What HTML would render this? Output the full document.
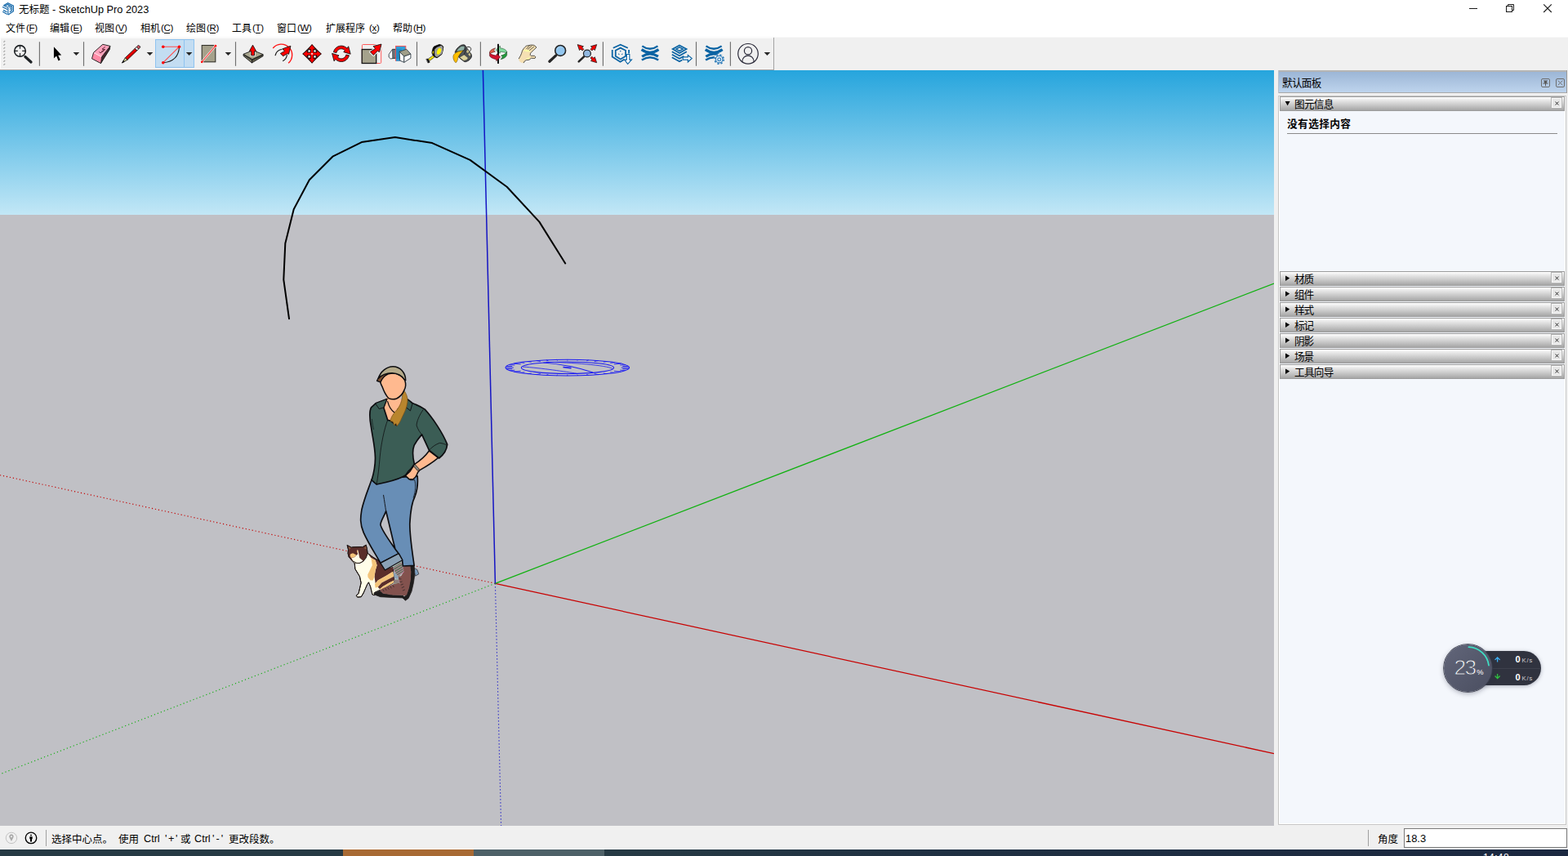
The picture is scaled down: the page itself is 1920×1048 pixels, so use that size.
<!DOCTYPE html>
<html lang="zh">
<head>
<meta charset="utf-8">
<title>SketchUp Pro 2023</title>
<style>
*{box-sizing:border-box;margin:0;padding:0}
html,body{width:1920px;height:1048px;overflow:hidden;background:#fff;font-family:"Liberation Sans",sans-serif;color:#000}
#app{position:relative;width:1920px;height:1048px;overflow:hidden;background:#fff}
.abs{position:absolute}
svg.cj{position:absolute;overflow:visible;pointer-events:none}
svg text{font-family:"Liberation Sans","Noto Sans CJK SC",sans-serif}
.t{position:absolute;white-space:nowrap;line-height:1}
/* ---------- title + menu ---------- */
#titlebar{left:0;top:0;width:1920px;height:23px;background:#fff}
#menubar{left:0;top:23px;width:1920px;height:22px;background:#fff}
.mlat{font-size:11.5px;top:29px;letter-spacing:-0.3px}
/* ---------- toolbar ---------- */
#toolbar{left:0;top:45px;width:1920px;height:41px;background:#f0f0f0;border-top:1px solid #fafafa}
.sep{position:absolute;top:51px;width:1px;height:30px;background:#8c8c8c}
/* ---------- viewport ---------- */
#view{left:0;top:86px;width:1560px;height:925px;background:#c0c0c5;overflow:hidden}
#sky{left:0;top:0;width:1560px;height:177.4px;background:linear-gradient(#26a5dd 0%,#c2e7f6 100%)}
/* ---------- right tray ---------- */
#tray{left:1560px;top:86px;width:360px;height:925px;background:#f0f0f0}
#trayTitle{left:1565px;top:86px;width:354px;height:28px;background:linear-gradient(#b4b4b4 0,#b4b4b4 2px,#9cb6d6 2px,#bed4ed 27px,#a9a9a9 27px);border-right:1px solid #9a9a9a;border-left:1px solid #b9c3cf}
#trayBody{left:1565px;top:117px;width:353px;height:893px;background:#f4f7fc;border:1px solid #c6c6c6;box-shadow:inset 0 0 0 1px #fff}
.sec{position:absolute;left:1567px;width:349px;height:18px;border:1px solid #9c9c9c;background:linear-gradient(#ffffff 0%,#e9e9e9 22%,#c9c9c9 60%,#a6a6a6 100%)}
.sec .x{position:absolute;right:3px;top:1px;width:12px;height:12px;background:#e6e6e6;border:1px solid #fafafa;box-shadow:0 0 0 1px #b4b4b4}
/* ---------- status bar ---------- */
#status{left:0;top:1011px;width:1920px;height:29px;background:#f0f0f0;border-bottom:1px solid #fff}
#vcb{left:1719px;top:1014px;width:200px;height:24px;background:#fff;border:1px solid #7a7a7a}
#strip{left:0;top:1040px;width:1920px;height:8px;background:linear-gradient(90deg,#263a44 0,#263a44 40%,#1f3042 60%,#1b2840 100%)}
</style>
</head>
<body>
<div id="app">

<!-- ================= TITLE BAR ================= -->
<div id="titlebar" class="abs"></div>
<svg class="abs" style="left:0;top:0" width="1920" height="23" viewBox="0 0 1920 23">
<!-- SketchUp logo : zoomed coords [0,0,40,24] x43.67 -->
<g transform="scale(0.0229)" fill="none" stroke="#0f65a8" stroke-width="50" stroke-linejoin="miter" stroke-linecap="butt">
<path d="M190 290L420 160L718 305V600L445 785"/>
<path d="M275 305L420 235L638 345V560L520 645"/>
<path d="M425 318L560 385V540"/>
<path d="M130 372L400 505"/>
<path d="M195 292L432 408V795"/>
<path d="M175 540L372 640"/>
<path d="M140 625L385 765"/>
</g>
<!-- window controls -->
<g fill="none" stroke="#1a1a1a" stroke-width="1">
<path d="M1799 10.5H1809"/>
<rect x="1844.5" y="7.5" width="7" height="7"/>
<path d="M1846.5 7.5V5.5H1853.5V12.5H1851.5"/>
<path d="M1890.2 5.4L1899.8 15M1899.8 5.4L1890.2 15" stroke-width="1.1"/>
</g>
</svg>

<svg class="cj" style="left:22.6px;top:3.27px" width="38.5" height="17.5" viewBox="0 -13.12 38.5 17.5"><text x="0" y="0" font-size="12.5" fill="#000">无标题</text></svg>
<svg class="cj" style="left:64px;top:2.28px" width="120.3" height="19.12" viewBox="0 -14.03 120.3 19.12"><text x="0" y="0" font-size="12.75" textLength="118.3" lengthAdjust="spacing" fill="#000">- SketchUp Pro 2023</text></svg>

<!-- ================= MENU BAR ================= -->
<div id="menubar" class="abs"></div>
<svg class="cj" style="left:7.4px;top:26.2px" width="25" height="16.8" viewBox="0 -12.6 25 16.8"><text x="0" y="0" font-size="12" fill="#000">文件</text></svg>
<svg class="cj" style="left:61.4px;top:26.2px" width="25" height="16.8" viewBox="0 -12.6 25 16.8"><text x="0" y="0" font-size="12" fill="#000">编辑</text></svg>
<svg class="cj" style="left:116.4px;top:26.2px" width="25" height="16.8" viewBox="0 -12.6 25 16.8"><text x="0" y="0" font-size="12" fill="#000">视图</text></svg>
<svg class="cj" style="left:172.4px;top:26.2px" width="25" height="16.8" viewBox="0 -12.6 25 16.8"><text x="0" y="0" font-size="12" fill="#000">相机</text></svg>
<svg class="cj" style="left:228.4px;top:26.2px" width="25" height="16.8" viewBox="0 -12.6 25 16.8"><text x="0" y="0" font-size="12" fill="#000">绘图</text></svg>
<svg class="cj" style="left:284.4px;top:26.2px" width="25" height="16.8" viewBox="0 -12.6 25 16.8"><text x="0" y="0" font-size="12" fill="#000">工具</text></svg>
<svg class="cj" style="left:339.4px;top:26.2px" width="25" height="16.8" viewBox="0 -12.6 25 16.8"><text x="0" y="0" font-size="12" fill="#000">窗口</text></svg>
<svg class="cj" style="left:399.4px;top:26.2px" width="49" height="16.8" viewBox="0 -12.6 49 16.8"><text x="0" y="0" font-size="12" fill="#000">扩展程序</text></svg>
<svg class="cj" style="left:481.4px;top:26.2px" width="25" height="16.8" viewBox="0 -12.6 25 16.8"><text x="0" y="0" font-size="12" fill="#000">帮助</text></svg>
<svg class="cj" style="left:32px;top:25.35px" width="16.1" height="17.25" viewBox="0 -12.65 16.1 17.25"><text x="0" y="0" font-size="11.5" textLength="14.1" lengthAdjust="spacing" fill="#000">(F)</text></svg><div class="abs" style="left:35.53px;top:40.1px;width:6.43px;height:1px;background:#000"></div>
<svg class="cj" style="left:86px;top:25.35px" width="16.74" height="17.25" viewBox="0 -12.65 16.74 17.25"><text x="0" y="0" font-size="11.5" textLength="14.74" lengthAdjust="spacing" fill="#000">(E)</text></svg><div class="abs" style="left:89.53px;top:40.1px;width:7.08px;height:1px;background:#000"></div>
<svg class="cj" style="left:141px;top:25.35px" width="16.74" height="17.25" viewBox="0 -12.65 16.74 17.25"><text x="0" y="0" font-size="11.5" textLength="14.74" lengthAdjust="spacing" fill="#000">(V)</text></svg><div class="abs" style="left:144.53px;top:40.1px;width:7.08px;height:1px;background:#000"></div>
<svg class="cj" style="left:197px;top:25.35px" width="17.38" height="17.25" viewBox="0 -12.65 17.38 17.25"><text x="0" y="0" font-size="11.5" textLength="15.38" lengthAdjust="spacing" fill="#000">(C)</text></svg><div class="abs" style="left:200.53px;top:40.1px;width:7.72px;height:1px;background:#000"></div>
<svg class="cj" style="left:253px;top:25.35px" width="17.38" height="17.25" viewBox="0 -12.65 17.38 17.25"><text x="0" y="0" font-size="11.5" textLength="15.38" lengthAdjust="spacing" fill="#000">(R)</text></svg><div class="abs" style="left:256.53px;top:40.1px;width:7.72px;height:1px;background:#000"></div>
<svg class="cj" style="left:309px;top:25.35px" width="16.1" height="17.25" viewBox="0 -12.65 16.1 17.25"><text x="0" y="0" font-size="11.5" textLength="14.1" lengthAdjust="spacing" fill="#000">(T)</text></svg><div class="abs" style="left:312.53px;top:40.1px;width:6.43px;height:1px;background:#000"></div>
<svg class="cj" style="left:364px;top:25.35px" width="19.93" height="17.25" viewBox="0 -12.65 19.93 17.25"><text x="0" y="0" font-size="11.5" textLength="17.93" lengthAdjust="spacing" fill="#000">(W)</text></svg><div class="abs" style="left:367.53px;top:40.1px;width:10.26px;height:1px;background:#000"></div>
<svg class="cj" style="left:452px;top:25.35px" width="14.82" height="17.25" viewBox="0 -12.65 14.82 17.25"><text x="0" y="0" font-size="11.5" textLength="12.82" lengthAdjust="spacing" fill="#000">(x)</text></svg><div class="abs" style="left:455.53px;top:40.1px;width:5.15px;height:1px;background:#000"></div>
<svg class="cj" style="left:506px;top:25.35px" width="17.38" height="17.25" viewBox="0 -12.65 17.38 17.25"><text x="0" y="0" font-size="11.5" textLength="15.38" lengthAdjust="spacing" fill="#000">(H)</text></svg><div class="abs" style="left:509.53px;top:40.1px;width:7.72px;height:1px;background:#000"></div>

<!-- ================= TOOLBAR ================= -->
<div id="toolbar" class="abs"></div>
<svg class="abs" style="left:0;top:45px" width="960" height="42" viewBox="0 45 960 42">
<rect x="0" y="45" width="1" height="41" fill="#fff"/>
<rect x="0" y="46" width="948" height="1" fill="#fbfbfb"/>
<rect x="0" y="84" width="947" height="1" fill="#f8f8f8"/>
<rect x="0" y="85" width="948" height="1" fill="#a3a3a3"/>
<rect x="947" y="46" width="1" height="40" fill="#a3a3a3"/>
<path d="M4.1 52.6 L5.9 50.8" stroke="#fff" stroke-width="1.3"/><path d="M4.4 51.8 L6.2 50" stroke="#a2a2a2" stroke-width="1.1"/>
<path d="M4.1 56.6 L5.9 54.8" stroke="#fff" stroke-width="1.3"/><path d="M4.4 55.8 L6.2 54" stroke="#a2a2a2" stroke-width="1.1"/>
<path d="M4.1 60.6 L5.9 58.8" stroke="#fff" stroke-width="1.3"/><path d="M4.4 59.8 L6.2 58" stroke="#a2a2a2" stroke-width="1.1"/>
<path d="M4.1 64.6 L5.9 62.8" stroke="#fff" stroke-width="1.3"/><path d="M4.4 63.8 L6.2 62" stroke="#a2a2a2" stroke-width="1.1"/>
<path d="M4.1 68.6 L5.9 66.8" stroke="#fff" stroke-width="1.3"/><path d="M4.4 67.8 L6.2 66" stroke="#a2a2a2" stroke-width="1.1"/>
<path d="M4.1 72.6 L5.9 70.8" stroke="#fff" stroke-width="1.3"/><path d="M4.4 71.8 L6.2 70" stroke="#a2a2a2" stroke-width="1.1"/>
<path d="M4.1 76.6 L5.9 74.8" stroke="#fff" stroke-width="1.3"/><path d="M4.4 75.8 L6.2 74" stroke="#a2a2a2" stroke-width="1.1"/>
<path d="M4.1 80.6 L5.9 78.8" stroke="#fff" stroke-width="1.3"/><path d="M4.4 79.8 L6.2 78" stroke="#a2a2a2" stroke-width="1.1"/>
<line x1="48.4" y1="51.2" x2="48.4" y2="80.8" stroke="#707070" stroke-width="1.15"/>
<line x1="102.5" y1="51.2" x2="102.5" y2="80.8" stroke="#707070" stroke-width="1.15"/>
<line x1="288.5" y1="51.2" x2="288.5" y2="80.8" stroke="#707070" stroke-width="1.15"/>
<line x1="510.5" y1="51.2" x2="510.5" y2="80.8" stroke="#707070" stroke-width="1.15"/>
<line x1="588.4" y1="51.2" x2="588.4" y2="80.8" stroke="#707070" stroke-width="1.15"/>
<line x1="738.4" y1="51.2" x2="738.4" y2="80.8" stroke="#707070" stroke-width="1.15"/>
<line x1="852.5" y1="51.2" x2="852.5" y2="80.8" stroke="#707070" stroke-width="1.15"/>
<line x1="894.4" y1="51.2" x2="894.4" y2="80.8" stroke="#707070" stroke-width="1.15"/>
<polygon points="89.6,63.9 97.2,63.9 93.4,68.1" fill="#262626"/>
<polygon points="179.7,63.9 187.3,63.9 183.5,68.1" fill="#262626"/>
<polygon points="227.8,63.9 235.4,63.9 231.6,68.1" fill="#262626"/>
<polygon points="275.6,63.9 283.2,63.9 279.4,68.1" fill="#262626"/>
<polygon points="935.6,63.9 943.2,63.9 939.4,68.1" fill="#262626"/>
<g fill="none" stroke="#1e2225" stroke-linecap="round">
<circle cx="24.5" cy="62.4" r="6.8" stroke-width="1.6"/>
<path d="M24.5 55.8V59.7M24.5 65.1V69M17.9 62.4H21.8M27.2 62.4H31.1" stroke-width="1.1" stroke-linecap="butt"/>
<line x1="30.9" y1="69.6" x2="38" y2="75.9" stroke-width="3.3"/>
</g>
<polygon points="65.9,57.3 65.9,71.5 69.1,68.6 71.5,74.4 73.8,73.3 71.2,67.8 75.3,67.6" fill="#000" stroke="#fff" stroke-width="1" stroke-linejoin="round" paint-order="stroke"/>
<polygon points="124.6,69.6 134.9,56.4 134.3,60.4 123.5,77.6" fill="#47262d"/>
<polygon points="114.6,64.3 125.8,54.3 134.9,56.4 124.6,69.6" fill="#ffa3bc"/>
<polygon points="114.6,64.3 124.6,69.6 123.5,77.6 112.5,71.8" fill="#ff8ba6"/>
<path d="M115 64.7L124.5 69.7" stroke="#ffe9ee" stroke-width="0.9" fill="none"/>
<path d="M114.6 64.3L125.8 54.3L134.9 56.4L134.3 60.4L123.5 77.6L112.5 71.8ZM124.6 69.6L123.5 77.6M124.6 69.6L134.9 56.4" fill="none" stroke="#141414" stroke-width="0.9" stroke-linejoin="round"/>
<path d="M128.8 57.4L125 60.2L128.6 60.6L123.8 63.4M127.4 61.8L123 65L121.4 63.4" stroke="#5a2032" stroke-width="0.95" fill="none"/>
<g transform="translate(149.6,76.9) rotate(-43.9)" stroke="#141414" stroke-width="0.85" stroke-linejoin="round">
<rect x="26" y="-1.8" width="3.6" height="3.6" rx="1.3" fill="#d8505e"/>
<rect x="23.3" y="-1.8" width="2.9" height="3.6" fill="#f6f6f6"/>
<rect x="7" y="-1.8" width="16.4" height="3.6" fill="#f40000"/>
<rect x="7.3" y="0.5" width="15.8" height="1" fill="#b00000" stroke="none"/>
<polygon points="0,0 7,-1.8 7,1.8" fill="#dedc9c"/>
<polygon points="0,0 2.9,-0.75 2.9,0.75" fill="#141414"/>
</g>
<rect x="190.5" y="48.5" width="47" height="34" fill="#c3ddf2" stroke="#8fc3f0" stroke-width="1"/>
<line x1="225.5" y1="48.5" x2="225.5" y2="82.5" stroke="#8fc3f0" stroke-width="1"/>
<polygon points="227.8,63.9 235.4,63.9 231.6,68.1" fill="#262626"/>
<path d="M199.75 76.7Q218.6 75.2 219.5 57.2" fill="none" stroke="#141414" stroke-width="1.05"/>
<path d="M199.75 57.2H219.5L199.75 76.7" fill="none" stroke="#ff4d4d" stroke-width="1.05"/>
<circle cx="199.75" cy="57.2" r="1.8" fill="#ff0000"/>
<circle cx="219.5" cy="57.2" r="1.8" fill="#ff0000"/>
<circle cx="199.75" cy="76.7" r="1.8" fill="#ff0000"/>
<rect x="247.2" y="55.5" width="16.6" height="20.3" fill="#a5a18b" stroke="#33322a" stroke-width="1.1"/>
<line x1="247.2" y1="75.8" x2="263.9" y2="56.2" stroke="#f4f4f4" stroke-width="2.4"/>
<circle cx="247.2" cy="75.8" r="2.1" fill="#f4f4f4"/><circle cx="263.9" cy="56.2" r="2.1" fill="#f4f4f4"/>
<line x1="247.2" y1="75.8" x2="263.9" y2="56.2" stroke="#ff3535" stroke-width="1.05"/>
<circle cx="247.2" cy="75.8" r="1.35" fill="#ff0000"/><circle cx="263.9" cy="56.2" r="1.35" fill="#ff0000"/>
<g stroke="#1c1c1c" stroke-width="0.9" stroke-linejoin="round">
<polygon points="298,66.3 308.9,72.6 308.4,77 298,68.4" fill="#7d7b66"/>
<polygon points="308.9,72.6 322.1,66.6 322.1,68.7 308.4,77" fill="#66644f"/>
<polygon points="298,66.3 309.8,61.6 322.1,66.6 308.9,72.6" fill="#a9a68e"/>
<path d="M298.6 67.4L308.7 73.9L321.6 67.7" fill="none" stroke-width="0.7"/>
</g>
<rect x="306.6" y="62.6" width="6" height="6.4" fill="#fbfbfb"/>
<polygon points="309.5,55.2 313.7,62.7 311.5,62.7 311.5,67.9 307.7,67.9 307.7,62.7 305.3,62.7" fill="#ff0000" stroke="#141414" stroke-width="0.9" stroke-linejoin="round"/>
<path d="M334.24 58.99A13.2 13.2 0 1 1 353.09 77.32" fill="none" stroke="#ff1414" stroke-width="1.35"/>
<path d="M337 68.2Q338.2 61.4 345.4 60.2M346.2 74.7Q351 72.2 351.4 67" fill="none" stroke="#1c1c1c" stroke-width="1.15"/>
<polygon points="355.9,56.3 345.9,59.8 348.5,62.6 343.3,65.5 346.7,68.7 351.6,65.8 353.6,66.2" fill="#ff0000" stroke="#141414" stroke-width="0.9" stroke-linejoin="round"/>
<polygon points="382.05,54.3 393.65,65.9 382.05,77.5 370.45,65.9" fill="#2a2a2a"/>
<polygon points="382.05,54.6 386.55,60.2 383.8,60.2 383.8,64.15 387.75,64.15 387.75,61.4 393.35,65.9 387.75,70.4 387.75,67.65 383.8,67.65 383.8,71.6 386.55,71.6 382.05,77.2 377.55,71.6 380.3,71.6 380.3,67.65 376.35,67.65 376.35,70.4 370.75,65.9 376.35,61.4 376.35,64.15 380.3,64.15 380.3,60.2 377.55,60.2" fill="#ff0000" stroke="#1a0000" stroke-width="0.8"/>
<rect x="377.25" y="61.1" width="2.7" height="2.7" fill="#fff" stroke="#2a2a2a" stroke-width="0.35"/>
<rect x="377.25" y="68" width="2.7" height="2.7" fill="#fff" stroke="#2a2a2a" stroke-width="0.35"/>
<rect x="384.15" y="61.1" width="2.7" height="2.7" fill="#fff" stroke="#2a2a2a" stroke-width="0.35"/>
<rect x="384.15" y="68" width="2.7" height="2.7" fill="#fff" stroke="#2a2a2a" stroke-width="0.35"/>
<rect x="381.2" y="65.05" width="1.7" height="1.7" fill="#fff"/>
<polygon points="408.41,63.78 408.84,62.32 409.5,60.95 410.36,59.7 411.41,58.59 412.62,57.66 413.95,56.94 415.39,56.43 416.89,56.15 418.41,56.11 419.92,56.31 421.38,56.74 422.75,57.4 424,58.26 425.11,59.31 426.65,56.74 429.19,66.19 420.81,63.68 422.36,61.79 421.68,61.14 420.9,60.6 420.05,60.2 419.15,59.93 418.21,59.81 417.27,59.83 416.35,60 415.46,60.32 414.63,60.77 413.89,61.34 413.24,62.02 412.7,62.8 412.3,63.65 412.03,64.55" fill="#ff0000" stroke="#141414" stroke-width="0.9" stroke-linejoin="round"/>
<polygon points="427.39,67.82 426.96,69.28 426.3,70.65 425.44,71.9 424.39,73.01 423.18,73.94 421.85,74.66 420.41,75.17 418.91,75.45 417.39,75.49 415.88,75.29 414.42,74.86 413.05,74.2 411.8,73.34 410.69,72.29 409.15,74.86 406.61,65.41 414.99,67.92 413.44,69.81 414.12,70.46 414.9,71 415.75,71.4 416.65,71.67 417.59,71.79 418.53,71.77 419.45,71.6 420.34,71.28 421.17,70.83 421.91,70.26 422.56,69.58 423.1,68.8 423.5,67.95 423.77,67.05" fill="#ff0000" stroke="#141414" stroke-width="0.9" stroke-linejoin="round"/>
<rect x="443.4" y="54.5" width="23.3" height="23" rx="1.2" fill="none" stroke="#ff5a5a" stroke-width="1"/>
<rect x="443.2" y="60.5" width="17.5" height="17" fill="#a5a28c" stroke="#141414" stroke-width="1.3"/>
<polygon points="467.05,54 457,56.6 459.6,59.5 453.3,63.5 457.3,67.6 462.4,62.3 464.5,63.8" fill="#fbfbfb" stroke="#fbfbfb" stroke-width="2.6" stroke-linejoin="round"/>
<polygon points="467.05,54 457,56.6 459.6,59.5 453.3,63.5 457.3,67.6 462.4,62.3 464.5,63.8" fill="#ff0000" stroke="#141414" stroke-width="0.9" stroke-linejoin="round"/>
<g stroke="#38434c" stroke-width="0.95" stroke-linejoin="round">
<polygon points="476.2,66.6 480.5,60.3 484.2,60.3 484.2,71.2 478.3,71.9 476.2,70" fill="#fff"/>
<polygon points="480.7,60.5 485.2,60.5 485.2,71.1 480.9,71.6" fill="#6f747a"/>
</g>
<rect x="484.6" y="56.4" width="12.2" height="18" fill="#2f9fd9" stroke="#ff4a4a" stroke-width="0.9"/>
<rect x="485.2" y="59.6" width="6.6" height="14" fill="#1f8cc6"/>
<rect x="485" y="72.6" width="12" height="2.2" fill="#2f9fd9"/>
<g stroke="#38434c" stroke-width="0.95" stroke-linejoin="round">
<polygon points="489.1,63.2 494.8,68.9 494.8,76.4 489.7,74.1" fill="#fff"/>
<polygon points="494.8,68.9 502.9,66 502.9,71.2 494.8,76.4" fill="#fff"/>
<polygon points="489.1,63.2 497.7,60.3 502.9,66 494.8,68.9" fill="#a09e88"/>
</g>
<!-- ===== tape measure / paint bucket : zoomed coords of [506,46] x17.45 ===== -->
<g transform="translate(506,46) scale(0.057307)" stroke-linejoin="round" stroke-linecap="round">
<!-- bucket moved -->
</g>
<!-- ===== tape measure : zoomed coords of [518,50] x32.76 ===== -->
<g transform="translate(518,50) scale(0.030525)" stroke-linejoin="round" stroke-linecap="round">
<polygon points="136,732 200,722 270,858 204,882" fill="#0c0c0c" stroke="#0c0c0c" stroke-width="18"/>
<polygon points="402,596 470,640 282,790 204,742" fill="#ffef00" stroke="#141414" stroke-width="20"/>
<path d="M262 716L300 768M330 672L366 722" stroke="#8a7f00" stroke-width="14" fill="none"/>
<path d="M370 420L400 300L440 232L560 182L660 146L760 180L810 240L790 400L750 540L560 680L480 650L400 580L366 500Z" fill="#0c0c0c" stroke="#0c0c0c" stroke-width="30"/>
<path d="M492 332L560 272L738 202L778 262L768 420L738 520L560 640L492 598L472 450Z" fill="#9a9a9a" stroke="#cfcfcf" stroke-width="20"/>
<ellipse cx="640" cy="420" rx="76" ry="136" transform="rotate(22 640 420)" fill="#fff400"/>
<ellipse cx="406" cy="460" rx="22" ry="60" transform="rotate(8 406 460)" fill="#e8d900"/>
</g>
<!-- ===== paint bucket : zoomed coords of [550,50] x32.76 ===== -->
<g transform="translate(550,50) scale(0.030525)" stroke-linejoin="round" stroke-linecap="round">
<path d="M722 246C760 232 820 236 858 276C890 320 876 372 842 404L800 440" fill="none" stroke="#1d1d1d" stroke-width="30"/>
<path d="M236 452C262 362 330 262 470 178C560 140 640 160 652 196L722 302L802 422L880 522C920 590 900 660 866 704C830 760 760 812 662 842C630 846 604 836 588 822L420 692L372 640Z" fill="#4c5054" stroke="#1d1d1d" stroke-width="26"/>
<path d="M420 666L600 556L762 690L692 770L590 792Z" fill="#ddd39c" stroke="#1d1d1d" stroke-width="10"/>
<path d="M690 440L742 340L802 440L742 492Z" fill="#cabe8a"/>
<path d="M760 530L830 482L862 560L822 622Z" fill="#cabe8a"/>
<path d="M640 300C660 380 640 470 600 540" fill="none" stroke="#2c2f33" stroke-width="34"/>
<path d="M470 500L500 470M520 540L550 510M565 470L592 442" stroke="#8a8f94" stroke-width="12" fill="none"/>
<path d="M290 430C300 380 350 300 470 222C540 190 600 196 620 230C634 270 620 330 598 366L560 390Z" fill="#8fb0a6" stroke="#1d1d1d" stroke-width="20"/>
<path d="M562 394C500 396 410 410 330 442C260 474 196 524 166 590C148 660 170 760 212 822C230 850 254 878 270 874C300 860 322 800 340 750C350 690 366 640 400 580C440 520 500 450 562 394Z" fill="#ffc000" stroke="#2a2000" stroke-width="14"/>
<path d="M200 600C190 680 214 770 258 840" fill="none" stroke="#e6a400" stroke-width="22"/>
</g>
<!-- ===== orbit / pan / zoom : zoomed coords of [590,46] ===== -->
<g transform="translate(590,46) scale(0.057307)" stroke-linejoin="round">
<!-- hand moved -->
<!-- zoom -->
<line x1="1584" y1="382" x2="1446" y2="510" stroke="#262626" stroke-width="58" stroke-linecap="round"/>
<circle cx="1678" cy="278" r="112" fill="#93c6ee" stroke="#262626" stroke-width="28"/>
<path d="M1610 250C1625 210 1670 190 1710 205" fill="none" stroke="#a9d4f4" stroke-width="18" stroke-linecap="round"/>
</g>
<!-- ===== orbit : zoomed coords of [594,50] x32.76 ===== -->
<g transform="translate(594,50) scale(0.030525)" stroke-linejoin="round">
<ellipse cx="520" cy="516" rx="300" ry="62" fill="#fff"/>
<path d="M180 470C180 400 280 320 415 290L352 370L402 440C320 455 250 480 212 506Z" fill="#e0604a" stroke="#2a0e0c" stroke-width="15"/>
<path d="M430 370L600 200L608 290C720 296 850 360 872 440L860 476C800 465 700 450 604 440L600 506Z" fill="#7fda9c" stroke="#0e3018" stroke-width="15"/>
<rect x="495" y="125" width="60" height="790" fill="#000"/>
<path d="M180 470C200 520 320 575 448 590L466 520L612 650L452 812L442 742C330 725 190 660 178 590Z" fill="#d0142e" stroke="#2a0006" stroke-width="15"/>
<path d="M640 590C740 560 830 520 872 440L876 566C850 650 760 716 630 742L700 642Z" fill="#239a3c" stroke="#08260f" stroke-width="15"/>
</g>
<!-- ===== pan hand : zoomed coords of [630,50] x32.76 ===== -->
<g transform="translate(630,50) scale(0.030525)" stroke-linejoin="round" stroke-linecap="round">
<path d="M175 712L240 600L282 500L312 400L360 320L420 250L470 206L590 180L680 165L780 176L850 226L880 266L780 360L690 440L640 500L630 570L660 600L800 600L850 650L820 702L670 696L590 760L470 772L400 822L370 876L300 882L220 842L170 762Z" fill="#f5e0b3"/>
<ellipse cx="490" cy="398" rx="135" ry="34" transform="rotate(8 490 398)" fill="#fbfba6"/>
<ellipse cx="550" cy="706" rx="78" ry="30" transform="rotate(-14 550 706)" fill="#fbfba6"/>
<path d="M175 712L240 600L282 500L312 400L360 320L420 250L470 206L590 180L680 165L780 176L850 226L880 266L780 360L690 440L640 500L630 570L660 600L800 600L850 650L820 702L670 696L590 760L470 772L400 822L370 876" fill="none" stroke="#2c2a24" stroke-width="26"/>
<path d="M480 322L600 196M540 334L690 204M604 378L772 242" fill="none" stroke="#2c2a24" stroke-width="24"/>
</g>
<!-- ===== zoom extents : zoomed coords of [696,46] ===== -->
<g transform="translate(696,46) scale(0.057307)" stroke-linejoin="round">
<line x1="336" y1="404" x2="222" y2="512" stroke="#262626" stroke-width="46" stroke-linecap="round"/>
<circle cx="400" cy="340" r="78" fill="#92b9e1" stroke="#262626" stroke-width="22"/>
<g fill="#ff0000" stroke="#1c1c1c" stroke-width="14">
<polygon points="195,150 322,188 292,212 328,250 298,280 262,244 236,272"/>
<polygon points="605,150 478,188 508,212 472,250 502,280 538,244 564,272"/>
<polygon points="605,536 478,498 508,474 472,436 502,406 538,442 564,414"/>
</g>
</g>
<!-- ===== 3D warehouse / extension warehouse / layout : zoomed coords of [740,46] ===== -->
<g transform="translate(740,46) scale(0.057307)" fill="none" stroke="#0a63a3" stroke-linejoin="miter">
<path d="M188 222L345 152L503 222" stroke-width="30"/>
<path d="M170 262V412L340 520L425 468M525 262V342" stroke-width="31"/>
<path d="M345 220L455 274V398L345 462L240 398V274Z" stroke-width="31"/>
<path d="M345 275L362 292L345 306L328 292ZM298 338L322 352V372L298 356ZM392 338L368 352V372L392 356Z" fill="#0a63a3" stroke="none"/>
<path d="M478 358H538V474H584L500 564L430 474H478Z" fill="#fff" stroke-width="20"/>
<!-- extension warehouse -->
<path d="M808 180Q975 300 1142 180" stroke-width="40"/>
<path d="M795 255Q975 385 1160 255" stroke-width="56"/>
<path d="M805 405Q975 290 1150 405" stroke-width="56"/>
<path d="M800 480Q975 365 1155 480" stroke-width="44"/>
<!-- layout -->
<path d="M1460 245L1605 165L1755 245L1605 330Z" stroke-width="30"/>
<path d="M1532 245L1605 206L1680 245L1605 288Z" stroke-width="26"/>
<path d="M1445 302L1605 390L1760 302M1445 362L1605 450L1700 398M1445 422L1605 510L1662 480" stroke-width="30"/>
<path d="M1678 418H1786V376L1870 446L1786 520V474H1678Z" fill="#fff" stroke-width="21"/>
</g>
<!-- ===== extension manager ===== -->
<g transform="translate(818.2,46) scale(0.057307)" fill="none" stroke="#0a63a3">
<path d="M808 180Q975 300 1142 180" stroke-width="40"/>
<path d="M795 255Q975 385 1160 255" stroke-width="56"/>
<path d="M805 405Q975 290 1150 405" stroke-width="56"/>
<path d="M800 480Q975 365 1155 480" stroke-width="44"/>
</g>
<circle cx="880.7" cy="72.7" r="6.7" fill="#f0f0f0"/>
<circle cx="880.7" cy="72.7" r="5.5" fill="none" stroke="#2a7ab8" stroke-width="1.7" stroke-dasharray="2.16 2.16"/>
<circle cx="880.7" cy="72.7" r="4.2" fill="#fff" stroke="#2a7ab8" stroke-width="1.2"/>
<circle cx="880.7" cy="72.7" r="1.9" fill="#fff" stroke="#2a7ab8" stroke-width="1.2"/>
<!-- ===== user ===== -->
<clipPath id="ucl"><circle cx="916" cy="65.8" r="12.3"/></clipPath>
<g fill="none" stroke="#2b2b3a" stroke-width="1.2">
<circle cx="916" cy="65.8" r="12.3"/>
<circle cx="916" cy="62.3" r="4.6"/>
<circle cx="916" cy="75.2" r="7.1" clip-path="url(#ucl)"/>
</g>

</svg>


<!-- ================= VIEWPORT ================= -->
<div id="view" class="abs">
<div id="sky" class="abs"></div>
<svg class="abs" style="left:0;top:0" width="1560" height="925" viewBox="0 86 1560 925">
<!-- axes: dotted negative halves -->
<g fill="none" stroke-width="1.15">
<line x1="606.4" y1="714.3" x2="509" y2="693" stroke="#c40000" stroke-dasharray="1.2 2.85"/><line x1="424.5" y1="674.5" x2="0" y2="581.7" stroke="#c40000" stroke-dasharray="1.2 2.85"/>
<line x1="606.4" y1="714.3" x2="0" y2="947.8" stroke="#12ae12" stroke-dasharray="1.2 3.05"/>
<line x1="606.4" y1="714.3" x2="613.6" y2="1011" stroke="#1a1ac8" stroke-dasharray="1.2 2.8"/>
</g>
<!-- axes: solid positive halves -->
<g fill="none" stroke-width="1.25">
<line x1="606.4" y1="714.3" x2="1560" y2="922.6" stroke="#c80000"/>
<line x1="606.4" y1="714.3" x2="1560" y2="347" stroke="#0fb10f"/>
<line x1="606.4" y1="714.3" x2="591.4" y2="86" stroke="#1414c4" stroke-width="1.5"/>
</g>
<!-- arc being drawn (polyline segments) -->
<polyline fill="none" stroke="#000" stroke-width="2" stroke-linejoin="round" stroke-linecap="round"
 points="354,390.2 347.3,342.3 349.3,298.1 359.7,256.2 378.8,220.2 407.3,191.7 442.8,174.1 483.8,168.1 529.2,175.1 575.6,195.9 620.7,228.7 660.4,271.6 692.2,322.5"/>
<!-- protractor -->
<g fill="none" stroke="#1a1af2" stroke-width="1.05">
<ellipse cx="694.8" cy="450.1" rx="75.8" ry="9.9"/>
<path d="M770.6 450.1L760.7 450.1M769.4 451.8L762.4 451.7M766.0 453.5L759.3 453.2M760.4 455.1L751.9 454.4M752.9 456.5L747.3 455.9M743.5 457.7L738.9 457.0M732.7 458.7L727.8 457.6M720.7 459.4L718.3 458.5M708.0 459.8L706.7 458.9M694.8 460.0L694.8 458.7M681.6 459.8L682.9 458.9M668.9 459.4L671.3 458.5M656.9 458.7L661.8 457.6M646.1 457.7L650.7 457.0M636.7 456.5L642.3 455.9M629.2 455.1L637.7 454.4M623.6 453.5L630.3 453.2M620.2 451.8L627.2 451.7M619.0 450.1L628.9 450.1M620.2 448.4L627.2 448.5M623.6 446.7L630.3 447.0M629.2 445.2L637.7 445.8M636.7 443.7L642.3 444.3M646.1 442.5L650.7 443.2M656.9 441.5L661.8 442.6M668.9 440.8L671.3 441.7M681.6 440.4L682.9 441.3M694.8 440.2L694.8 441.5M708.0 440.4L706.7 441.3M720.7 440.8L718.3 441.7M732.7 441.5L727.8 442.6M743.5 442.5L738.9 443.2M752.9 443.7L747.3 444.3M760.4 445.2L751.9 445.8M766.0 446.7L759.3 447.0M769.4 448.4L762.4 448.5" stroke-width="0.9"/>
<ellipse cx="695" cy="450.2" rx="56.6" ry="7.3"/>
<path d="M665.4 444.1C690 446 712 451.5 726 455.9"/>
<path d="M668.5 443.3C700 443.6 742 447.2 750.5 451.4" stroke-width="0.8"/>
<path d="M640 449C662 450.5 694 455.2 706 457.3" stroke-width="0.8"/>
<path d="M689.5 449.5L699.5 450.7" stroke-width="1.7"/>
</g>
<!-- ============ CAT + BOOTS ; coords = zoom of [420,660,520,740] (x13.1) ============ -->
<g transform="translate(420,660) scale(0.076336)" stroke-linejoin="round" stroke-linecap="round">
<!-- cat silhouette (white base) -->
<path d="M185 390L150 350L95 290L80 230L85 170L70 100L135 135L150 130L300 125L310 130L370 95L385 160L395 228L480 290L560 340L612 382L660 498L800 452L822 660L810 702L640 800L560 830L520 850L500 902L470 886L440 762L412 694L390 724L330 862L292 926L232 932L214 906L250 870L290 702L268 600L196 482Z" fill="#fffde8" stroke="#17100f" stroke-width="13"/>
<!-- brown back -->
<path d="M395 228L480 290L560 340L612 382L660 498L800 452L802 520L690 590L560 660L520 712L505 600L520 500L545 420L520 340L450 300L420 262Z" fill="#5a2e2a"/>
<!-- orange shoulder -->
<path d="M450 300L520 340L545 420L520 500L505 600L482 662L440 662L400 612L396 570L430 500L470 420L456 332Z" fill="#f3c47a"/>
<!-- haunch stripes -->
<path d="M802 520L816 600L720 650L620 700L560 770L520 782L510 722L560 660L690 590Z" fill="#f3c47a"/>
<path d="M816 600L821 660L740 700L640 760L590 802L560 770L620 700L720 650Z" fill="#5a2e2a"/>
<path d="M821 660L810 702L700 762L620 812L590 802L640 760L740 700Z" fill="#f3c47a"/>
<path d="M412 694L440 762L470 886" stroke="#17100f" stroke-width="9" fill="none"/>
<path d="M330 862L390 724L412 694" stroke="#17100f" stroke-width="9" fill="none"/>
<path d="M185 390L196 482L268 600L290 702L250 870L214 906L232 932L292 926L330 862M470 886L500 902L520 850M395 228L480 290L560 340L612 382" fill="none" stroke="#17100f" stroke-width="13"/>
<!-- head -->
<path d="M70 100L135 135L150 130L300 125L310 130L370 95L385 160L395 230L370 300L330 350L270 385L215 380L150 350L95 290L80 230L85 170Z" fill="#5a2e2a" stroke="#17100f" stroke-width="12"/>
<path d="M88 118L128 142L100 170Z" fill="#8b5a3c"/><path d="M362 112L340 150L378 160Z" fill="#8b5a3c"/>
<path d="M120 240L160 225L215 255L185 292L130 302L114 270Z" fill="#f3c47a"/>
<path d="M135 305L185 290L238 240L224 176L240 176L266 300L322 346L270 380L215 376L160 346Z" fill="#fffde8"/>
<path d="M222 182L234 182L238 215L228 215Z" fill="#f3b060"/>
<path d="M200 388C240 392 290 385 332 352" stroke="#17100f" stroke-width="9" fill="none"/>
<!-- boot 2 (upright) -->
<path d="M880 600L1000 590L1030 900L960 912L930 770Z" fill="#83524e"/>
<path d="M1075 415L1142 430L1152 560L1132 700L1100 840L1050 950L1000 986L958 940L1020 900L1060 780L1085 650L1090 520Z" fill="#1f1d1d" stroke="#1f1d1d" stroke-width="10"/>
<path d="M958 442L1075 415L1090 520L1085 650L1060 780L1020 900L985 870L940 760L900 650L975 520Z" fill="#83524e"/>
<path d="M1150 470L1190 490L1216 560L1160 592L1150 540Z" fill="#7d9dbd" stroke="#17100f" stroke-width="8"/>
<!-- sock + cuff back -->
<path d="M800 452L930 370L976 520L890 602L850 560Z" fill="#5f8a60"/>
<path d="M806 470L936 392M818 505L948 428M832 538L960 462M850 566L970 494M872 590L976 524" stroke="#d070a8" stroke-width="13" fill="none"/>
<path d="M812 487L942 410M825 521L954 445M840 552L965 478M860 578L974 508" stroke="#2b2b2b" stroke-width="3" fill="none"/>
<path d="M810 520L850 560L890 610L880 642L822 626Z" fill="#8ba2b6"/>
<path d="M820 652L900 650L905 700L815 716Z" fill="#5f8a60"/>
<path d="M822 668L902 664M820 696L904 688" stroke="#d070a8" stroke-width="11" fill="none"/>
<!-- boot 1 (flat) -->
<path d="M500 862L540 850L590 830L640 875L800 900L960 905L1000 962L950 942L800 936L600 926L510 892Z" fill="#1f1d1d" stroke="#1f1d1d" stroke-width="12"/>
<path d="M590 822L640 790L810 725L905 700L940 760L985 870L960 902L800 897L640 872Z" fill="#83524e"/>
<path d="M640 812L655 836M680 796L695 820M720 780L735 804M760 762L775 786M800 744L815 768M900 640L930 640M915 690L945 682M930 735L962 722M945 780L978 765M960 825L990 812" stroke="#1f1d1d" stroke-width="8" fill="none"/>
</g>
<g transform="translate(410,580) scale(0.15274)" stroke-linejoin="round" stroke-linecap="round">
<!-- jeans -->
<path d="M296 44L662 18C668 80 662 130 642 182C616 232 606 300 601 400C600 500 620 620 636 736L546 740L540 690L512 640L484 604C462 520 440 420 410 300C396 340 366 380 366 410C380 460 440 540 490 612L512 640L366 716C330 650 270 560 230 470C200 400 205 350 215 290C235 200 270 120 296 44Z" fill="#688eb6" stroke="#0d0d10" stroke-width="11"/>
<path d="M390 172C398 220 404 262 410 300" stroke="#0d0d10" stroke-width="6" fill="none"/>
<path d="M598 30L604 52L640 50C650 90 648 140 630 190" stroke="#0d0d10" stroke-width="5" fill="none"/>
<!-- cuff -->
<path d="M366 716L512 640L542 692L402 772Z" fill="#8ba2b6" stroke="#0d0d10" stroke-width="8"/>
</g>

<!-- ============ PERSON upper ; coords = zoom of [420,440,570,600] ============ -->
<g transform="translate(420,440) scale(0.15274)" stroke-linejoin="round" stroke-linecap="round">
<!-- forearm + hand -->
<path d="M690 733L764 788C720 825 665 860 618 886L600 905C592 930 580 950 560 962L530 960L500 932L535 900L574 840C620 810 660 775 690 733Z" fill="#ffb98f" stroke="#0d0d10" stroke-width="10"/>
<path d="M574 838L612 880L598 892L562 852Z" fill="#8d8a7e" stroke="#0d0d10" stroke-width="5"/>
<!-- neck / chest skin -->
<path d="M350 300L450 295L480 345L440 440L400 505L352 492L325 385Z" fill="#ffb98f"/>
<!-- shirt -->
<path d="M262 352L226 386C212 412 214 480 225 540C236 620 256 700 258 780C260 830 250 900 230 968L270 1002C340 988 420 972 482 940L502 928L522 900C545 880 560 860 572 840C560 790 555 730 570 690C590 650 615 622 632 602L690 728L770 792C810 762 832 722 836 682C800 590 720 470 656 400C620 376 585 362 556 350L520 322L512 388L440 400L430 530L380 492L358 486L326 386L352 318Z" fill="#3b5d55" stroke="#0d0d10" stroke-width="11"/>
<!-- collar pieces -->
<path d="M262 352L352 318L326 386L292 396Z" fill="#3b5d55" stroke="#0d0d10" stroke-width="6"/>
<path d="M520 322L556 356L540 412L508 386Z" fill="#3b5d55" stroke="#0d0d10" stroke-width="6"/>
<!-- placket, seams, cuff -->
<path d="M358 486C330 560 305 680 296 780C290 860 280 940 270 1000" stroke="#0d0d10" stroke-width="5" fill="none"/>
<path d="M642 404C610 450 590 500 590 530C600 560 615 585 632 602" stroke="#0d0d10" stroke-width="5" fill="none"/>
<path d="M690 728C715 700 745 680 775 670C800 672 820 680 836 690" stroke="#0d0d10" stroke-width="5" fill="none"/>
<path d="M232 480C236 520 240 540 246 560" stroke="#0d0d10" stroke-width="4" fill="none"/>
<!-- V neck line -->
<path d="M358 338C368 378 388 408 412 426" stroke="#0d0d10" stroke-width="8" fill="none"/>
<!-- ponytail -->
<path d="M488 248C512 278 524 318 514 360C508 398 486 438 472 468C460 498 446 520 432 534L424 512L410 528L402 500L380 494C384 462 404 436 432 404C458 372 470 340 474 304C476 282 482 262 488 248Z" fill="#b9852d" stroke="#7a5318" stroke-width="5"/>
<!-- face -->
<path d="M300 182C312 140 350 112 395 112C440 112 482 135 496 168C506 196 502 226 490 248C480 276 456 300 430 314C408 322 384 320 366 312C346 290 326 250 316 222C306 202 300 192 300 182Z" fill="#ffb98f" stroke="#0d0d10" stroke-width="10"/>
<!-- cap -->
<path d="M272 172C284 130 320 100 368 108C340 124 316 150 300 182Z" fill="#7b4f30" stroke="#0d0d10" stroke-width="9"/>
<path d="M284 152C300 96 350 58 400 57C456 57 502 105 502 168L490 160C472 132 438 112 395 110C350 108 312 125 284 152Z" fill="#b4aa8a" stroke="#0d0d10" stroke-width="10"/>
</g>

</svg>

</div>

<!-- ================= RIGHT TRAY ================= -->
<div id="tray" class="abs"></div>
<div id="trayTitle" class="abs"></div>
<svg class="cj" style="left:1570px;top:93.07px" width="49" height="17.64" viewBox="0 -13.23 49 17.64" shape-rendering="crispEdges"><text x="0" y="0" font-size="12.6" textLength="48.4" lengthAdjust="spacing" fill="#000">默认面板</text></svg>
<div id="trayBody" class="abs"></div>
<div class="sec" style="top:118px"><div class="x"></div></div>
<svg class="cj" style="left:1585.1px;top:119.07px" width="49" height="17.64" viewBox="0 -13.23 49 17.64" shape-rendering="crispEdges"><text x="0" y="0" font-size="12.6" textLength="48.4" lengthAdjust="spacing" fill="#000">图元信息</text></svg>
<svg class="cj" style="left:1575.5px;top:143.06px" width="79" height="17.78" viewBox="0 -13.33 79 17.78" shape-rendering="crispEdges"><text x="0" y="0" font-size="12.7" font-weight="bold" textLength="78" lengthAdjust="spacing" fill="#000">没有选择内容</text></svg>
<div class="abs" style="left:1576px;top:163px;width:331px;height:1px;background:#8a8a8a"></div>
<div class="sec" style="top:332px"><div class="x"></div></div>
<div class="sec" style="top:351px"><div class="x"></div></div>
<div class="sec" style="top:370px"><div class="x"></div></div>
<div class="sec" style="top:389px"><div class="x"></div></div>
<div class="sec" style="top:408px"><div class="x"></div></div>
<div class="sec" style="top:427px"><div class="x"></div></div>
<div class="sec" style="top:446px"><div class="x"></div></div>
<svg class="cj" style="left:1585.1px;top:333.07px" width="25" height="17.64" viewBox="0 -13.23 25 17.64" shape-rendering="crispEdges"><text x="0" y="0" font-size="12.6" textLength="24.2" lengthAdjust="spacing" fill="#000">材质</text></svg>
<svg class="cj" style="left:1585.1px;top:352.07px" width="25" height="17.64" viewBox="0 -13.23 25 17.64" shape-rendering="crispEdges"><text x="0" y="0" font-size="12.6" textLength="24.2" lengthAdjust="spacing" fill="#000">组件</text></svg>
<svg class="cj" style="left:1585.1px;top:371.07px" width="25" height="17.64" viewBox="0 -13.23 25 17.64" shape-rendering="crispEdges"><text x="0" y="0" font-size="12.6" textLength="24.2" lengthAdjust="spacing" fill="#000">样式</text></svg>
<svg class="cj" style="left:1585.1px;top:390.07px" width="25" height="17.64" viewBox="0 -13.23 25 17.64" shape-rendering="crispEdges"><text x="0" y="0" font-size="12.6" textLength="24.2" lengthAdjust="spacing" fill="#000">标记</text></svg>
<svg class="cj" style="left:1585.1px;top:409.07px" width="25" height="17.64" viewBox="0 -13.23 25 17.64" shape-rendering="crispEdges"><text x="0" y="0" font-size="12.6" textLength="24.2" lengthAdjust="spacing" fill="#000">阴影</text></svg>
<svg class="cj" style="left:1585.1px;top:428.07px" width="25" height="17.64" viewBox="0 -13.23 25 17.64" shape-rendering="crispEdges"><text x="0" y="0" font-size="12.6" textLength="24.2" lengthAdjust="spacing" fill="#000">场景</text></svg>
<svg class="cj" style="left:1585.1px;top:447.07px" width="49" height="17.64" viewBox="0 -13.23 49 17.64" shape-rendering="crispEdges"><text x="0" y="0" font-size="12.6" textLength="48.4" lengthAdjust="spacing" fill="#000">工具向导</text></svg>
<svg class="abs" style="left:1560px;top:86px" width="360" height="400" viewBox="1560 86 360 400">
<!-- pin + close buttons in tray title -->
<g fill="none" stroke="#6e6e6e" stroke-width="1">
<rect x="1887.5" y="96.5" width="10" height="10" rx="1.5"/>
<rect x="1905.5" y="96.5" width="10" height="10" rx="1.5"/>
<path d="M1907.7 98.7L1913.3 104.3M1913.3 98.7L1907.7 104.3" stroke-width="0.9"/>
</g>
<path d="M1890 98.4H1895V99.4H1894V101.6H1895.6V102.6H1893V105.2H1892V102.6H1889.4V101.6H1891V99.4H1890Z" fill="#5a5a5a"/>
<!-- expanded triangle -->
<path d="M1573.6 124L1579.6 124L1576.6 129.2Z" fill="#000"/>
<!-- collapsed triangles -->
<g fill="#000">
<path d="M1574 337.4L1579.2 340.6L1574 343.9Z"/>
<path d="M1574 356.4L1579.2 359.6L1574 362.9Z"/>
<path d="M1574 375.4L1579.2 378.6L1574 381.9Z"/>
<path d="M1574 394.4L1579.2 397.6L1574 400.9Z"/>
<path d="M1574 413.4L1579.2 416.6L1574 419.9Z"/>
<path d="M1574 432.4L1579.2 435.6L1574 438.9Z"/>
<path d="M1574 451.4L1579.2 454.6L1574 457.9Z"/>
</g>
<!-- little x glyphs in section close boxes -->
<g stroke="#222" stroke-width="1" fill="none">
<path d="M1904.6 124.6L1908.4 128.4M1908.4 124.6L1904.6 128.4"/>
<path d="M1904.6 338.6L1908.4 342.4M1908.4 338.6L1904.6 342.4"/>
<path d="M1904.6 357.6L1908.4 361.4M1908.4 357.6L1904.6 361.4"/>
<path d="M1904.6 376.6L1908.4 380.4M1908.4 376.6L1904.6 380.4"/>
<path d="M1904.6 395.6L1908.4 399.4M1908.4 395.6L1904.6 399.4"/>
<path d="M1904.6 414.6L1908.4 418.4M1908.4 414.6L1904.6 418.4"/>
<path d="M1904.6 433.6L1908.4 437.4M1908.4 433.6L1904.6 437.4"/>
<path d="M1904.6 452.6L1908.4 456.4M1908.4 452.6L1904.6 456.4"/>
</g>
</svg>


<!-- floating network-speed widget -->
<div class="abs" style="left:1800px;top:797px;width:87px;height:42px;border-radius:21px;background:#30333f;box-shadow:0 1px 5px rgba(40,45,70,.35)"></div>
<div class="abs" style="left:1827px;top:818px;width:59px;height:1px;background:#3d404c"></div>
<div class="abs" style="left:1768.4px;top:788.9px;width:58.2px;height:58.2px;border-radius:50%;background:linear-gradient(135deg,#62667a 0%,#575b6e 45%,#4a4e60 100%);box-shadow:0 0 0 0.8px #3a3d4b,0 2px 6px rgba(40,45,70,.4)"></div>
<svg class="abs" style="left:1760px;top:780px" width="140" height="76" viewBox="1760 780 140 76">
<path d="M1798.4 792.2A25.7 25.7 0 0 1 1823 814.7" fill="none" stroke="#3fe0c5" stroke-width="1.7" stroke-linecap="round"/>
<text x="1780.4" y="825.9" font-family="Liberation Sans, sans-serif" font-size="26.2" letter-spacing="-1.5" fill="#fff" stroke="#555a6c" stroke-width="0.9">23</text>
<text x="1808.3" y="825.8" font-family="Liberation Sans, sans-serif" font-size="9.3" fill="#fff">%</text>
<path d="M1833.6 803.9L1837.1 807.4L1836.2 808.3L1834.25 806.4V810.4H1832.95V806.4L1831 808.3L1830.1 807.4Z" fill="#3db1f5"/>
<path d="M1833.6 831.4L1837.1 827.9L1836.2 827L1834.25 828.9V824.9H1832.95V828.9L1831 827L1830.1 827.9Z" fill="#2fc23f"/>
<g font-family="Liberation Sans, sans-serif">
<text x="1855.6" y="811.3" font-size="11" font-weight="bold" fill="#fff">0</text>
<text x="1863.6" y="811.3" font-size="7.6" letter-spacing="0.9" fill="#d0d0d4">K/s</text>
<text x="1855.6" y="832.9" font-size="11" font-weight="bold" fill="#fff">0</text>
<text x="1863.6" y="832.9" font-size="7.6" letter-spacing="0.9" fill="#d0d0d4">K/s</text>
</g>
</svg>


<!-- ================= STATUS BAR ================= -->
<div id="status" class="abs"></div>
<svg class="cj" style="left:63px;top:1018.67px" width="76" height="17.5" viewBox="0 -13.12 76 17.5"><text x="0" y="0" font-size="12.5" fill="#000">选择中心点。</text></svg>
<svg class="cj" style="left:145px;top:1018.67px" width="26" height="17.5" viewBox="0 -13.12 26 17.5"><text x="0" y="0" font-size="12.5" fill="#000">使用</text></svg>
<svg class="cj" style="left:175.6px;top:1017.13px" width="21.7" height="19.05" viewBox="0 -13.97 21.7 19.05"><text x="0" y="0" font-size="12.7" textLength="19.7" lengthAdjust="spacing" fill="#000">Ctrl</text></svg><svg class="cj" style="left:201.6px;top:1017.13px" width="17.5" height="19.05" viewBox="0 -13.97 17.5 19.05"><text x="0" y="0" font-size="12.7" textLength="15.5" lengthAdjust="spacing" fill="#000">'+'</text></svg>
<svg class="cj" style="left:221px;top:1018.67px" width="13.5" height="17.5" viewBox="0 -13.12 13.5 17.5"><text x="0" y="0" font-size="12.5" fill="#000">或</text></svg>
<svg class="cj" style="left:238.2px;top:1017.13px" width="21.7" height="19.05" viewBox="0 -13.97 21.7 19.05"><text x="0" y="0" font-size="12.7" textLength="19.7" lengthAdjust="spacing" fill="#000">Ctrl</text></svg><svg class="cj" style="left:260.4px;top:1017.13px" width="15.3" height="19.05" viewBox="0 -13.97 15.3 19.05"><text x="0" y="0" font-size="12.7" textLength="13.3" lengthAdjust="spacing" fill="#000">'-'</text></svg>
<svg class="cj" style="left:280px;top:1018.67px" width="63.5" height="17.5" viewBox="0 -13.12 63.5 17.5"><text x="0" y="0" font-size="12.5" fill="#000">更改段数。</text></svg>
<svg class="cj" style="left:1687px;top:1018.67px" width="26" height="17.5" viewBox="0 -13.12 26 17.5"><text x="0" y="0" font-size="12.5" fill="#000">角度</text></svg>
<div id="vcb" class="abs"></div>
<svg class="cj" style="left:1720.8px;top:1016.81px" width="27.1" height="19.35" viewBox="0 -14.19 27.1 19.35"><text x="0" y="0" font-size="12.9" textLength="25.1" lengthAdjust="spacing" fill="#000">18.3</text></svg>
<svg class="abs" style="left:0;top:1011px" width="1920" height="29" viewBox="0 1011 1920 29">
<!-- geo-location (disabled) -->
<circle cx="13.95" cy="1025.9" r="6.7" fill="none" stroke="#b6b6b6" stroke-width="0.8"/>
<path d="M13.95 1030 L11.6 1025.6 A2.75 2.75 0 1 1 16.3 1025.6 Z" fill="#a9a9a9"/>
<circle cx="13.95" cy="1024.2" r="1.05" fill="#f0f0f0"/>
<!-- credits (person in circle) -->
<circle cx="38" cy="1025.9" r="6.75" fill="none" stroke="#000" stroke-width="1.35"/>
<rect x="37.05" y="1021.7" width="1.9" height="1.5" rx="0.5" fill="#000"/>
<path d="M36.3 1024.2H39.7V1027.2H39V1030.4H37V1027.2H36.3Z" fill="#000"/>
<!-- separators -->
<rect x="56" y="1016" width="1" height="20" fill="#a0a0a0"/>
<rect x="1675" y="1016" width="1" height="20" fill="#a0a0a0"/>
</svg>


<!-- ================= BOTTOM STRIP ================= -->
<div id="strip" class="abs"></div>
<div class="abs" style="left:420px;top:1040px;width:160px;height:8px;background:#a86a34"></div>
<div class="abs" style="left:580px;top:1040px;width:160px;height:8px;background:#4e6168"></div>
<svg class="cj" style="left:1815.6px;top:1040.5px" width="33.6" height="18" viewBox="0 -13.2 33.6 18"><text x="0" y="0" font-size="12" textLength="31.6" lengthAdjust="spacing" fill="#fff">14:48</text></svg>

</div>
</body>
</html>
